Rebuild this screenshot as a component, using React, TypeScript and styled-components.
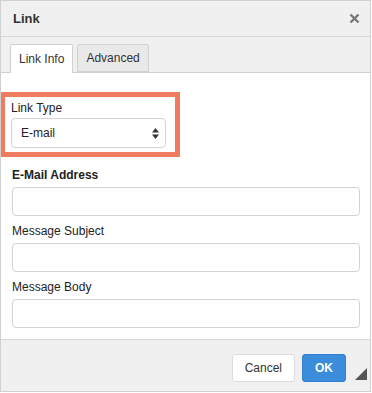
import { createGlobalStyle, styled } from 'styled-components';

const GlobalStyle = createGlobalStyle`
  html, body {
    margin: 0;
    padding: 0;
    background: #ffffff;
    font-family: "Liberation Sans", Arial, sans-serif;
    font-size: 12px;
    color: #222;
  }
  * { box-sizing: border-box; }
`;

const Dialog = styled.div`
  position: relative;
  width: 371px;
  height: 392px;
  border: 1px solid #d1d1d1;
  display: flex;
  flex-direction: column;
  background: #fff;
  overflow: hidden;
`;

const TitleBar = styled.div`
  height: 36px;
  flex: none;
  display: flex;
  align-items: center;
  justify-content: space-between;
  padding: 0 10px 1px 12px;
  background: #f0f0f0;
  border-bottom: 1px solid #d6d6d6;
`;

const Title = styled.span`
  font-weight: bold;
  font-size: 13px;
  color: #333;
`;

const Close = styled.svg`
  display: block;
`;

const TabStrip = styled.div`
  height: 36px;
  flex: none;
  display: flex;
  align-items: flex-end;
  gap: 4px;
  padding: 0 9px;
  background: #f0f0f0;
  border-bottom: 1px solid #d1d1d1;
`;

const Tab = styled.div<{ $active?: boolean }>`
  height: ${(p) => (p.$active ? '29px' : '28px')};
  margin-bottom: ${(p) => (p.$active ? '-1px' : '0')};
  padding: 0 8px;
  display: flex;
  align-items: center;
  border: 1px solid #d1d1d1;
  border-bottom: ${(p) => (p.$active ? 'none' : '1px solid #d1d1d1')};
  border-radius: 2px 2px 0 0;
  background: ${(p) => (p.$active ? '#fff' : '#e9e9e9')};
  color: #333;
  font-size: 12px;
`;

const Content = styled.div`
  flex: 1;
  min-height: 0;
  padding: 19px 11px 0 11px;
  display: flex;
  flex-direction: column;
`;

const Highlight = styled.div`
  width: 180px;
  margin-left: -12px;
  border: 5px solid #f07c60;
  padding: 4px 8px 4px 6px;
  margin-bottom: 11px;
`;

const Label = styled.div<{ $bold?: boolean; $gap?: number }>`
  font-size: 12px;
  line-height: 15px;
  font-weight: ${(p) => (p.$bold ? 'bold' : 'normal')};
  color: #222;
  margin-bottom: ${(p) => (p.$gap ?? 4)}px;
`;

const Select = styled.div`
  height: 30px;
  width: 155px;
  border: 1px solid #d4d4d4;
  border-radius: 4px;
  display: flex;
  align-items: center;
  justify-content: space-between;
  padding: 0 6px 0 9px;
  font-size: 12px;
  color: #222;
`;

const Arrows = styled.svg`
  display: block;
`;

const Field = styled.div`
  margin-bottom: 8px;
`;

const Input = styled.div`
  height: 29px;
  width: 348px;
  border: 1px solid #d4d4d4;
  border-radius: 4px;
  background: #fff;
`;

const Footer = styled.div`
  height: 52px;
  flex: none;
  background: #f0f0f0;
  border-top: 1px solid #d6d6d6;
  display: flex;
  justify-content: flex-end;
  align-items: flex-start;
  gap: 7px;
  padding: 14px 24px 0 0;
`;

const Button = styled.div<{ $primary?: boolean }>`
  height: 28px;
  padding: 0 12px;
  display: flex;
  align-items: center;
  border-radius: 3px;
  font-size: 12px;
  border: 1px solid ${(p) => (p.$primary ? '#2f7fd0' : '#dcdcdc')};
  background: ${(p) => (p.$primary ? '#3b8ddb' : '#fff')};
  color: ${(p) => (p.$primary ? '#fff' : '#333')};
  font-weight: ${(p) => (p.$primary ? 'bold' : 'normal')};
`;

const Resize = styled.svg`
  position: absolute;
  right: 3px;
  bottom: 11px;
`;

export default function App() {
  return (
    <>
      <GlobalStyle />
      <Dialog>
        <TitleBar>
          <Title>Link</Title>
          <Close width="11" height="11" viewBox="0 0 11 11">
            <path d="M1.5 1.5 L9.5 9.5 M9.5 1.5 L1.5 9.5" stroke="#777" strokeWidth="2.4" />
          </Close>
        </TitleBar>
        <TabStrip>
          <Tab $active>Link Info</Tab>
          <Tab>Advanced</Tab>
        </TabStrip>
        <Content>
          <Highlight>
            <Label $gap={2}>Link Type</Label>
            <Select>
              <span>E-mail</span>
              <Arrows width="7" height="11" viewBox="0 0 7 11">
                <path d="M3.5 0 L7 4.5 L0 4.5 Z M3.5 11 L7 6.5 L0 6.5 Z" fill="#333" />
              </Arrows>
            </Select>
          </Highlight>
          <Field>
            <Label $bold>E-Mail Address</Label>
            <Input />
          </Field>
          <Field>
            <Label>Message Subject</Label>
            <Input />
          </Field>
          <Field>
            <Label>Message Body</Label>
            <Input />
          </Field>
        </Content>
        <Footer>
          <Button>Cancel</Button>
          <Button $primary>OK</Button>
        </Footer>
        <Resize width="12" height="12" viewBox="0 0 12 12">
          <path d="M12 0 L12 12 L0 12 Z" fill="#555" />
        </Resize>
      </Dialog>
    </>
  );
}
